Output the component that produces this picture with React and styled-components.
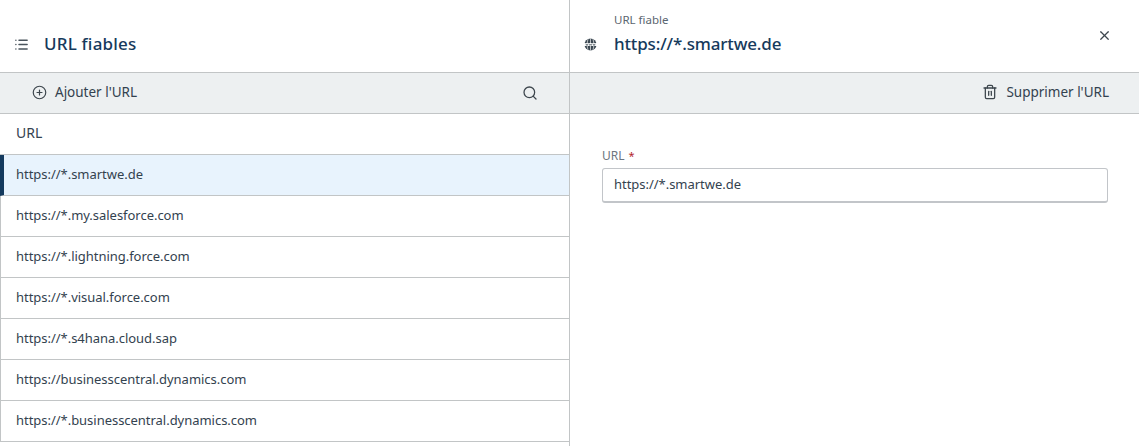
import styled, { createGlobalStyle } from "styled-components";
import { List, CirclePlus, Search, X, Trash2 } from "lucide-react";

const GlobalStyle = createGlobalStyle`
  html, body {
    margin: 0;
    padding: 0;
    background: #ffffff;
    overflow: hidden;
  }
  body {
    font-family: "Noto Sans", "Open Sans", sans-serif;
    color: #33424f;
  }
`;

const urls = [
  "https://*.smartwe.de",
  "https://*.my.salesforce.com",
  "https://*.lightning.force.com",
  "https://*.visual.force.com",
  "https://*.s4hana.cloud.sap",
  "https://businesscentral.dynamics.com",
  "https://*.businesscentral.dynamics.com",
];

const Page = styled.div`
  display: grid;
  grid-template-columns: 570px 1fr;
  height: 446px;
  overflow: hidden;
`;

const Column = styled.section`
  display: flex;
  flex-direction: column;
  min-width: 0;
  border-right: ${(p) => (p.$divided ? "1px solid #c2c5c6" : "none")};
`;

const Header = styled.header`
  display: flex;
  align-items: flex-end;
  height: 72px;
  flex: none;
  box-sizing: content-box;
  border-bottom: 1px solid #c2c5c6;
`;

const HeaderInner = styled.div`
  display: flex;
  align-items: flex-end;
  flex: 1;
  height: 100%;
  box-sizing: border-box;
  padding: ${(p) => p.$padding};
`;

const IconSlot = styled.div`
  display: flex;
  align-items: center;
  height: 24px;
`;

const CloseSlot = styled.div`
  display: flex;
  margin-bottom: 13px;
`;

const Title = styled.h1`
  margin: 0;
  font-size: 17px;
  line-height: 24px;
  font-weight: 500;
  color: #163a5c;
  letter-spacing: ${(p) => p.$tracking || "0"};
`;

const HeaderText = styled.div`
  display: flex;
  flex-direction: column;
  flex: 1;
  margin-left: ${(p) => p.$gap};
`;

const Eyebrow = styled.span`
  font-size: 11.5px;
  line-height: 15px;
  color: #5b6670;
  margin-bottom: 5px;
`;

const Toolbar = styled.div`
  display: flex;
  align-items: center;
  justify-content: ${(p) => p.$justify || "space-between"};
  height: 41px;
  flex: none;
  box-sizing: border-box;
  padding: ${(p) => p.$padding};
  background: #edf0f1;
  border-bottom: 1px solid #c2c5c6;
`;

const ToolButton = styled.div`
  display: flex;
  align-items: center;
  gap: 8px;
  margin-top: -2px;
  font-size: 13.5px;
  line-height: 18px;
  color: #33424f;
`;

const Row = styled.div`
  display: flex;
  align-items: center;
  height: 41px;
  flex: none;
  box-sizing: border-box;
  padding-bottom: ${(p) => (p.$head ? "3px" : "2px")};
  padding-left: ${(p) => (p.$selected ? "12px" : p.$head ? "16px" : "15px")};
  font-size: ${(p) => (p.$head ? "14px" : "13px")};
  letter-spacing: -0.03px;
  color: #33424f;
  background: ${(p) => (p.$selected ? "#e8f3fd" : "#ffffff")};
  border-bottom: 1px solid #c2c5c6;
  border-left: ${(p) =>
    p.$selected ? "4px solid #143a5e" : p.$head ? "none" : "1px solid #c2c5c6"};
`;

const Form = styled.form`
  display: flex;
  flex-direction: column;
  width: 506px;
  margin: 34px 0 0 32px;
`;

const Label = styled.label`
  font-size: 12px;
  line-height: 15px;
  color: #6d7680;
  margin-bottom: 5px;

  span {
    color: #b3262c;
    font-size: 11px;
    margin-left: 4px;
  }
`;

const Input = styled.div`
  display: flex;
  align-items: center;
  height: 30px;
  box-sizing: content-box;
  padding-left: 11px;
  padding-bottom: 2px;
  font-size: 13px;
  letter-spacing: -0.03px;
  color: #33424f;
  border: 1px solid #c2c5c9;
  border-bottom-width: 2px;
  border-radius: 3px;
`;

const Globe = () => (
  <svg width="13" height="13" viewBox="0 0 14 14" fill="none">
    <circle cx="7" cy="7" r="6.5" fill="#3a4650" />
    <rect x="0" y="5.4" width="14" height="3.2" fill="#ffffff" />
    <path d="M2 6l.6 2 .6-1.4.6 1.4.6-2M5.6 6l.6 2 .8-1.4.8 1.4.6-2M9.6 6l.6 2 .6-1.4.6 1.4.6-2" stroke="#3a4650" strokeWidth=".6" />
    <path d="M7 .5v4.9M7 8.6v4.9M4.5 1.5c-.7 1-1 2.4-1 3.9M9.5 1.5c.7 1 1 2.4 1 3.9M4.5 12.5c-.7-1-1-2.4-1-3.9M9.5 12.5c.7-1 1-2.4 1-3.9" stroke="#ffffff" strokeWidth=".7" />
  </svg>
);

const App = () => (
  <>
    <GlobalStyle />
    <Page>
      <Column $divided>
        <Header>
          <HeaderInner $padding="0 0 16px 14px">
            <IconSlot>
              <List size={15} color="#4a545c" strokeWidth={2.4} />
            </IconSlot>
            <HeaderText $gap="15px">
              <Title $tracking="0.2px">URL fiables</Title>
            </HeaderText>
          </HeaderInner>
        </Header>
        <Toolbar $padding="0 31px 0 32px">
          <ToolButton>
            <CirclePlus size={15} color="#3d464d" strokeWidth={1.9} />
            Ajouter l'URL
          </ToolButton>
          <Search size={16} color="#3d464d" strokeWidth={1.9} />
        </Toolbar>
        <Row $head>URL</Row>
        {urls.map((url, i) => (
          <Row key={url} $selected={i === 0}>
            {url}
          </Row>
        ))}
      </Column>
      <Column>
        <Header>
          <HeaderInner $padding="0 27px 16px 14px">
            <IconSlot>
              <Globe />
            </IconSlot>
            <HeaderText $gap="17px">
              <Eyebrow>URL fiable</Eyebrow>
              <Title $tracking="-0.15px">https://*.smartwe.de</Title>
            </HeaderText>
            <CloseSlot>
              <X size={15} color="#3d464d" strokeWidth={1.9} />
            </CloseSlot>
          </HeaderInner>
        </Header>
        <Toolbar $justify="flex-end" $padding="0 30px 0 0">
          <ToolButton>
            <Trash2 size={16} color="#3d464d" strokeWidth={1.9} />
            Supprimer l'URL
          </ToolButton>
        </Toolbar>
        <Form>
          <Label>
            URL<span>*</span>
          </Label>
          <Input>https://*.smartwe.de</Input>
        </Form>
      </Column>
    </Page>
  </>
);

export default App;
